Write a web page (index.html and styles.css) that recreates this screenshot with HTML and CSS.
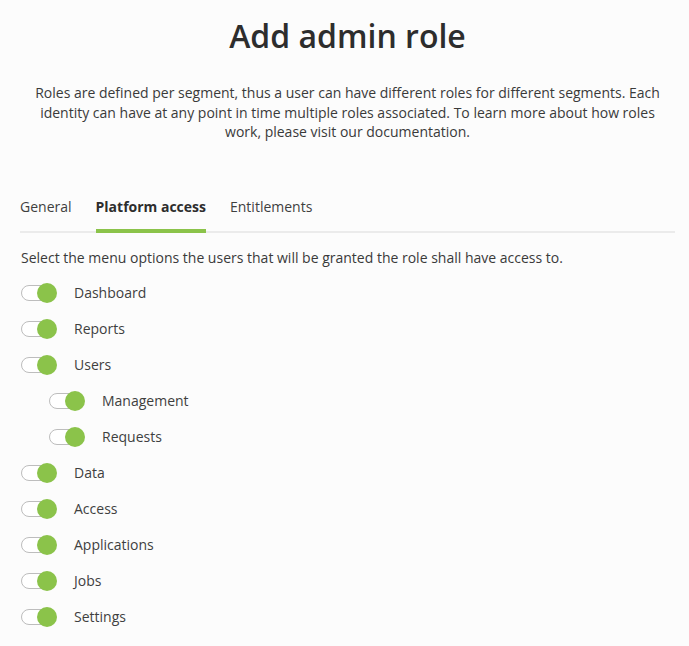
FILE: index.html
```html
<!DOCTYPE html>
<html lang="en">
<head>
  <meta charset="UTF-8" />
  <meta name="viewport" content="width=device-width, initial-scale=1.0"/>
  <title>Add admin role</title>
  <link rel="stylesheet" href="styles.css">
</head>
<body>

  <div class="page">
    <h1>Add admin role</h1>
    <p class="intro">Roles are defined per segment, thus a user can have different roles for different segments. Each identity can have at any point in time multiple roles associated. To learn more about how roles work, please visit our documentation.</p>

    <!-- Tabs -->
    <div class="tabs">
      <div class="tab">General</div>
      <div class="tab active">Platform access</div>
      <div class="tab">Entitlements</div>
    </div>

    <p class="hint">Select the menu options the users that will be granted the role shall have access to.</p>

    <ul class="options">
      <li><span class="toggle on"></span>Dashboard</li>
      <li><span class="toggle on"></span>Reports</li>
      <li><span class="toggle on"></span>Users</li>
      <li class="sub"><span class="toggle on"></span>Management</li>
      <li class="sub"><span class="toggle on"></span>Requests</li>
      <li><span class="toggle on"></span>Data</li>
      <li><span class="toggle on"></span>Access</li>
      <li><span class="toggle on"></span>Applications</li>
      <li><span class="toggle on"></span>Jobs</li>
      <li><span class="toggle on"></span>Settings</li>
    </ul>
  </div>

</body>
</html>
```

FILE: styles.css
```css
/* Base */
body {
  margin: 0;
  background-color: #fcfcfc;
  color: #3a3a3a;
  font-family: 'Open Sans', 'Noto Sans', sans-serif;
  font-size: 14px;
}

.page {
  padding: 0 14px 0 20px;
}

h1 {
  margin: 14px 0 0;
  font-size: 32px;
  font-weight: 600;
  line-height: 44px;
  text-align: center;
  color: #2d2d2d;
}

.intro {
  margin: 25px 12px 0;
  line-height: 19.5px;
  text-align: center;
}

/* Tabs */
.tabs {
  display: flex;
  gap: 24px;
  margin-top: 55px;
  border-bottom: 2px solid #ebebeb;
}

.tab {
  padding-bottom: 13px;
  margin-bottom: -2px;
  border-bottom: 4px solid transparent;
  color: #3f3f3f;
}

.tab.active {
  font-weight: 700;
  color: #2d2d2d;
  border-bottom-color: #8bc34a;
}

.hint {
  margin: 15px 0 0 1px;
}

/* Toggle list */
.options {
  list-style: none;
  margin: 8px 0 0;
  padding: 0;
}

.options li {
  display: flex;
  align-items: center;
  height: 36px;
  color: #3f3f3f;
}

.options li.sub {
  padding-left: 28px;
}

.toggle {
  position: relative;
  width: 30px;
  height: 16px;
  margin: 0 23px 0 1px;
  border: 1px solid #bdbdbd;
  border-radius: 9px;
  background: #fff;
  box-sizing: border-box;
}

.toggle.on::after {
  content: "";
  position: absolute;
  top: -3px;
  right: -7px;
  width: 20px;
  height: 20px;
  border-radius: 50%;
  background: #8bc34a;
}
```
